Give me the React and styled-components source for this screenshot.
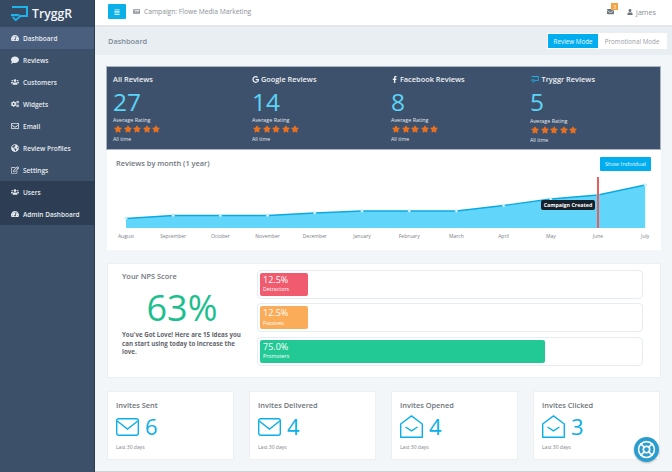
import React from "react";
import styled, { createGlobalStyle } from "styled-components";
import {
  FaTachometerAlt,
  FaComment,
  FaUsers,
  FaCogs,
  FaRegEnvelope,
  FaGlobeAmericas,
  FaRegEdit,
  FaStar,
  FaGoogle,
  FaFacebookF,
  FaNewspaper,
  FaAlignJustify,
  FaEnvelope,
  FaUser,
} from "react-icons/fa";
import { LifeBuoy } from "lucide-react";

const NAV = [
  { label: "Dashboard", icon: FaTachometerAlt, tone: "active" },
  { label: "Reviews", icon: FaComment },
  { label: "Customers", icon: FaUsers },
  { label: "Widgets", icon: FaCogs },
  { label: "Email", icon: FaRegEnvelope },
  { label: "Review Profiles", icon: FaGlobeAmericas },
  { label: "Settings", icon: FaRegEdit },
  { label: "Users", icon: FaUsers, tone: "admin" },
  { label: "Admin Dashboard", icon: FaTachometerAlt, tone: "admin" },
];

const MONTHS = [
  ["August", 218.5],
  ["September", 215.5],
  ["October", 215.5],
  ["November", 215.5],
  ["December", 213],
  ["January", 211],
  ["February", 211],
  ["March", 211],
  ["April", 205.5],
  ["May", 199],
  ["June", 195],
  ["July", 185],
];

const NPS = [
  { value: 12.5, label: "Detractors", color: "#f05b6f" },
  { value: 12.5, label: "Passives", color: "#fbac58" },
  { value: 75, label: "Promoters", color: "#22c994" },
];

const Logo = ({ size = 17 }) => (
  <svg width={size} height={size * 0.94} viewBox="0 0 17 16" fill="#1db4ec">
    <path d="M1 0 H17 V11 H8 V9 H15 V2 H1 Z" />
    <path d="M0 8 H8.5 L7 10.2 H0 Z" />
    <path d="M1.8 11 L4.6 14.2 L9.6 10" fill="none" stroke="#1db4ec" strokeWidth="1.8" />
  </svg>
);

const ClosedMail = () => (
  <svg width="23" height="18" viewBox="0 0 23 18" fill="none" stroke="#0bb0e8" strokeWidth="1.4">
    <rect x="0.7" y="0.7" width="21.6" height="16.6" rx="2" />
    <path d="M1.2 3 L11.5 11 L21.8 3" />
  </svg>
);

const OpenMail = () => (
  <svg width="23" height="23" viewBox="0 0 23 23" fill="none" stroke="#0bb0e8" strokeWidth="1.4">
    <path d="M0.7 9 L11.5 0.9 L22.3 9 V22.3 H0.7 Z" strokeLinejoin="round" />
    <path d="M5.5 12 L11.5 15.8 L17.5 12" />
  </svg>
);

const Stat = ({ icon, title, value, lowered }) => (
  <StatColumn>
    <StatTitle>
      {icon}
      {title}
    </StatTitle>
    <StatValue>{value}</StatValue>
    <StatCaption $lowered={lowered}>Average Rating</StatCaption>
    <Stars>
      {[0, 1, 2, 3, 4].map((i) => (
        <FaStar key={i} />
      ))}
    </Stars>
    <StatFoot>All time</StatFoot>
  </StatColumn>
);

const Chart = () => {
  const x = (i) => 12 + i * 47.2;
  const y = (v) => v - 171;
  const line = MONTHS.map(([, v], i) => `${x(i)},${y(v)}`).join(" ");
  const area = `${x(0)},57 ${line} ${x(11)},57`;

  return (
    <ChartFrame>
      <svg width="545" height="76" viewBox="0 0 545 76">
        <polygon points={area} fill="#62d6fa" />
        <polyline points={line} fill="none" stroke="#0ba9e2" strokeWidth="1.3" />
        {MONTHS.map(([, v], i) => (
          <circle key={i} cx={x(i)} cy={y(v)} r="1.3" fill="#e6f8fe" stroke="#8fdcf5" strokeWidth="0.5" />
        ))}
        <rect x="483" y="6" width="2" height="51" fill="#e85d5d" />
        {MONTHS.map(([m], i) => (
          <AxisLabel key={m} x={x(i)} y="67" textAnchor="middle">
            {m}
          </AxisLabel>
        ))}
      </svg>
      <Marker>Campaign Created</Marker>
    </ChartFrame>
  );
};

const App = () => (
  <Page>
    <GlobalStyle />
    <Sidebar>
      <Brand>
        <Logo size={17} />
        <BrandName>TryggR</BrandName>
      </Brand>
      {NAV.map(({ label, icon: Icon, tone }) => (
        <NavItem key={label} $tone={tone}>
          <Icon />
          {label}
        </NavItem>
      ))}
    </Sidebar>
    <Main>
      <TopBar>
        <MenuButton>
          <FaAlignJustify />
        </MenuButton>
        <Campaign>
          <FaNewspaper />
          Campaign: Flowe Media Marketing
        </Campaign>
        <MailLink>
          <FaEnvelope />
          <Badge>3</Badge>
        </MailLink>
        <UserLink>
          <FaUser />
          james
        </UserLink>
      </TopBar>
      <TitleBar>
        <PageTitle>Dashboard</PageTitle>
        <ModeSwitch>
          <ModeButton $active>Review Mode</ModeButton>
          <ModeButton>Promotional Mode</ModeButton>
        </ModeSwitch>
      </TitleBar>
      <Content>
        <div>
          <StatsPanel>
            <Stat title="All Reviews" value="27" />
            <Stat icon={<FaGoogle />} title="Google Reviews" value="14" />
            <Stat icon={<FaFacebookF />} title="Facebook Reviews" value="8" />
            <Stat icon={<Logo size={10} />} title="Tryggr Reviews" value="5" lowered />
          </StatsPanel>
          <ChartCard>
            <ChartHead>
              <CardTitle>Reviews by month (1 year)</CardTitle>
              <ShowButton>Show Individual</ShowButton>
            </ChartHead>
            <Chart />
          </ChartCard>
        </div>
        <NpsCard>
          <NpsSummary>
            <CardTitle>Your NPS Score</CardTitle>
            <NpsValue>63%</NpsValue>
            <NpsText>You've Got Love! Here are 15 ideas you can start using today to increase the love.</NpsText>
          </NpsSummary>
          <NpsBars>
            {NPS.map(({ value, label, color }) => (
              <BarTrack key={label}>
                <BarFill $color={color} style={{ width: `${value}%` }}>
                  <BarValue>{value.toFixed(1)}%</BarValue>
                  <BarLabel>{label}</BarLabel>
                </BarFill>
              </BarTrack>
            ))}
          </NpsBars>
        </NpsCard>
        <InviteRow>
          <InviteCard>
            <CardTitle>Invites Sent</CardTitle>
            <InviteCount>
              <ClosedMail />6
            </InviteCount>
            <InviteFoot>Last 30 days</InviteFoot>
          </InviteCard>
          <InviteCard>
            <CardTitle>Invites Delivered</CardTitle>
            <InviteCount>
              <ClosedMail />4
            </InviteCount>
            <InviteFoot>Last 30 days</InviteFoot>
          </InviteCard>
          <InviteCard>
            <CardTitle>Invites Opened</CardTitle>
            <InviteCount>
              <OpenMail />4
            </InviteCount>
            <InviteFoot>Last 30 days</InviteFoot>
          </InviteCard>
          <InviteCard>
            <CardTitle>Invites Clicked</CardTitle>
            <InviteCount>
              <OpenMail />3
            </InviteCount>
            <InviteFoot>Last 30 days</InviteFoot>
          </InviteCard>
        </InviteRow>
      </Content>
      <HelpButton>
        <LifeBuoy size={19} strokeWidth={2} />
      </HelpButton>
    </Main>
  </Page>
);

const GlobalStyle = createGlobalStyle`
  html, body {
    margin: 0;
    padding: 0;
    background: #f3f6f9;
  }
  * {
    box-sizing: border-box;
  }
  body {
    font-family: "Open Sans", "Liberation Sans", sans-serif;
  }
`;

const Page = styled.div`
  display: flex;
  width: 672px;
  height: 472px;
  overflow: hidden;
`;

const Sidebar = styled.nav`
  flex: 0 0 95px;
  background: #3c5069;
  border-right: 1px solid #2b3b50;
`;

const Brand = styled.div`
  display: flex;
  align-items: center;
  gap: 4px;
  height: 27px;
  padding: 0 0 0 11px;
  background: #364a63;
`;

const BrandName = styled.span`
  font-size: 12.2px;
  font-weight: 600;
  color: #f2f5f8;
`;

const NavItem = styled.div`
  display: flex;
  align-items: center;
  gap: 4px;
  height: 22px;
  padding-left: 11px;
  font-size: 6.5px;
  font-weight: 600;
  color: #e6ebf0;
  background: ${({ $tone }) =>
    $tone === "active" ? "#4a5f7e" : $tone === "admin" ? "#2d3e54" : "transparent"};

  svg {
    flex: 0 0 8px;
    width: 8px;
    height: 8px;
  }
`;

const Main = styled.main`
  position: relative;
  display: flex;
  flex: 1;
  flex-direction: column;
  min-width: 0;
  border-bottom: 1px solid #cfd3d7;
`;

const TopBar = styled.header`
  display: flex;
  align-items: center;
  height: 27px;
  padding: 0 16px 2px 13px;
  background: #fff;
  border-bottom: 2px solid #e3e7ea;
`;

const MenuButton = styled.div`
  display: flex;
  align-items: center;
  justify-content: center;
  width: 18px;
  height: 15px;
  border-radius: 1px;
  color: #fff;
  background: #0bb0e8;

  svg {
    width: 6px;
    height: 6px;
  }
`;

const Campaign = styled.div`
  display: flex;
  flex: 1;
  align-items: center;
  gap: 4px;
  margin-left: 7px;
  font-size: 6.7px;
  color: #8b9198;

  svg {
    width: 7px;
    height: 7px;
  }
`;

const MailLink = styled.div`
  position: relative;
  display: flex;
  margin-right: 13px;
  color: #6f7780;

  svg {
    width: 7px;
    height: 7px;
  }
`;

const Badge = styled.span`
  position: absolute;
  top: -5px;
  left: 4px;
  display: flex;
  align-items: center;
  justify-content: center;
  width: 7px;
  height: 7px;
  font-size: 5px;
  color: #fff;
  background: #f5a340;
`;

const UserLink = styled.div`
  display: flex;
  align-items: center;
  gap: 3px;
  font-size: 7.2px;
  color: #8b9198;

  svg {
    width: 6px;
    height: 6px;
    color: #6f7780;
  }
`;

const TitleBar = styled.div`
  display: flex;
  align-items: center;
  justify-content: space-between;
  height: 28px;
  padding: 0 5px 0 13px;
  background: #e9eef2;
`;

const PageTitle = styled.h1`
  margin: 0;
  font-size: 7.4px;
  font-weight: 600;
  color: #7d8b99;
`;

const ModeSwitch = styled.div`
  display: flex;
  height: 16px;
  border: 1px solid #fff;
`;

const ModeButton = styled.div`
  display: flex;
  align-items: center;
  padding: 0 ${({ $active }) => ($active ? "5.5px" : "6.5px")};
  font-size: 6.3px;
  color: ${({ $active }) => ($active ? "#e9f8fd" : "#9aa1a8")};
  background: ${({ $active }) => ($active ? "#00aeef" : "#fff")};
`;

const Content = styled.div`
  display: flex;
  flex-direction: column;
  gap: 13px;
  padding: 11px 11px 0 11px;
`;

const StatsPanel = styled.section`
  display: grid;
  grid-template-columns: repeat(4, 139px);
  height: 84px;
  padding: 7px 0 0 6px;
  background: #3e516c;
  border: 1px solid #aab4c2;
`;

const StatColumn = styled.div`
  display: flex;
  flex-direction: column;
  align-items: flex-start;
`;

const StatTitle = styled.div`
  display: flex;
  align-items: center;
  gap: 1.5px;
  font-size: 7.4px;
  font-weight: 600;
  line-height: 11px;
  color: #eef2f6;

  svg {
    height: 7px;
  }
`;

const StatValue = styled.div`
  margin-top: 1.5px;
  font-size: 24.5px;
  line-height: 29px;
  color: #5bd5f7;
`;

const StatCaption = styled.div`
  margin-top: ${({ $lowered }) => ($lowered ? "1.8px" : "0.8px")};
  font-size: 5.4px;
  line-height: 8px;
  color: #e3e8ee;
`;

const Stars = styled.div`
  display: flex;
  gap: 1.5px;
  margin: 1px 0 1.4px 1px;
  color: #e8701f;

  svg {
    width: 8px;
    height: 8px;
  }
`;

const StatFoot = styled.div`
  font-size: 5.2px;
  line-height: 8px;
  color: #e3e8ee;
`;

const ChartCard = styled.section`
  height: 100px;
  margin-left: 1px;
  padding: 7px 10px 0 9px;
  background: #fff;
`;

const ChartHead = styled.div`
  display: flex;
  align-items: flex-start;
  justify-content: space-between;
  height: 14px;
`;

const CardTitle = styled.h2`
  margin: 0;
  font-size: 7.4px;
  font-weight: 600;
  line-height: 12px;
  color: #6e757c;
`;

const ShowButton = styled.div`
  display: flex;
  align-items: center;
  height: 14px;
  padding: 0 5px;
  border-radius: 1px;
  font-size: 5.6px;
  color: #eaf8fd;
  background: #00aeef;
`;

const ChartFrame = styled.div`
  position: relative;
  margin-left: -2px;
`;

const AxisLabel = styled.text`
  font-size: 5px;
  fill: #7b8187;
`;

const Marker = styled.div`
  position: absolute;
  top: 29px;
  left: 427px;
  width: 54px;
  height: 10px;
  border-radius: 2px;
  font-size: 5.3px;
  font-weight: 700;
  line-height: 10px;
  text-align: center;
  white-space: nowrap;
  color: #fff;
  background: #17212b;
`;

const NpsCard = styled.section`
  display: flex;
  height: 115px;
  margin-left: 1px;
  padding: 6px 17px 0 14px;
  background: #fff;
  border: 1px solid #edf0f3;
`;

const NpsSummary = styled.div`
  flex: 0 0 120px;
`;

const NpsValue = styled.div`
  margin: 4px 0 1px;
  font-size: 36px;
  line-height: 44px;
  text-align: center;
  color: #1cc08e;
`;

const NpsText = styled.p`
  margin: 0;
  font-size: 6.2px;
  font-weight: 700;
  line-height: 8.6px;
  color: #5f666d;
`;

const NpsBars = styled.div`
  display: flex;
  flex: 1;
  flex-direction: column;
  gap: 4.3px;
  margin-left: 15px;
`;

const BarTrack = styled.div`
  height: 29px;
  padding: 2px;
  border: 1px solid #e6ecf1;
  border-radius: 4px;
  background: #fff;
`;

const BarFill = styled.div`
  height: 100%;
  padding: 1px 3px;
  border-radius: 2px;
  color: #fff;
  background: ${({ $color }) => $color};
`;

const BarValue = styled.div`
  font-size: 9px;
  line-height: 12.4px;
`;

const BarLabel = styled.div`
  font-size: 5.3px;
  line-height: 7.4px;
`;

const InviteRow = styled.section`
  display: grid;
  grid-template-columns: repeat(4, 127px);
  gap: 15px;
  margin-left: 1px;
`;

const InviteCard = styled.div`
  height: 69px;
  padding: 7px 8px 0;
  background: #fff;
  border: 1px solid #edf0f3;
`;

const InviteCount = styled.div`
  display: flex;
  align-items: center;
  gap: 6px;
  height: 27px;
  margin-top: 2px;
  font-size: 22px;
  line-height: 27px;
  color: #0bb0e8;
`;

const InviteFoot = styled.div`
  margin-top: 3px;
  font-size: 5px;
  line-height: 8px;
  color: #7b8187;
`;

const HelpButton = styled.div`
  position: absolute;
  right: 13px;
  bottom: 9px;
  display: flex;
  align-items: center;
  justify-content: center;
  width: 25px;
  height: 25px;
  border-radius: 50%;
  color: #fff;
  background: #2a9dd0;
  box-shadow: 0 1px 2px rgba(0, 0, 0, 0.25);
`;

export default App;
